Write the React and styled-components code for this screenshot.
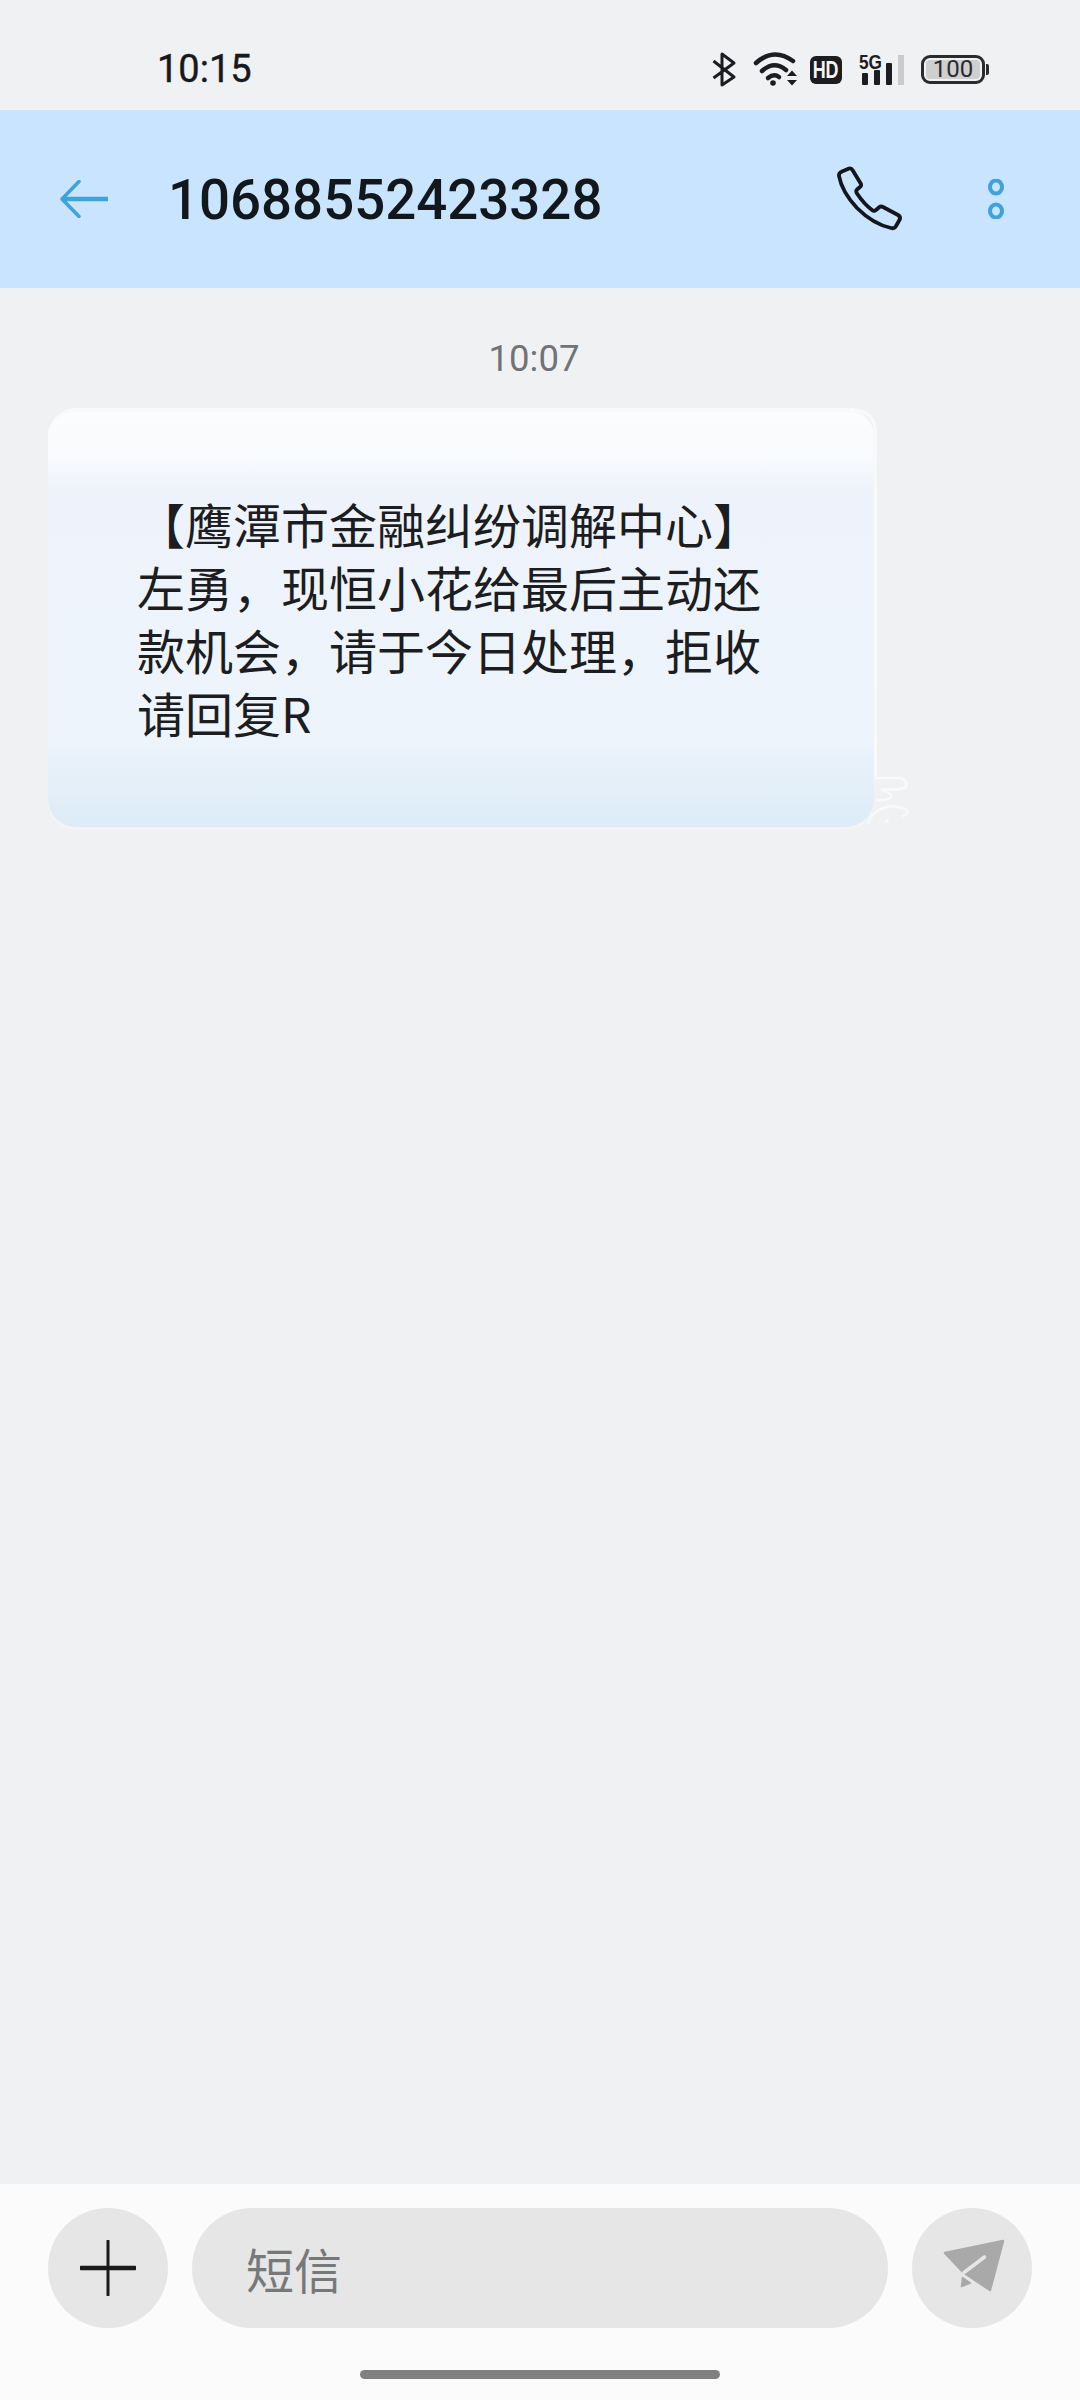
import React from "react";
import styled, { createGlobalStyle } from "styled-components";

const Global = createGlobalStyle`
  html, body { margin: 0; padding: 0; background: #f0f1f3; }
  * { box-sizing: border-box; }
`;

const Page = styled.div`
  width: 1080px;
  height: 2400px;
  display: flex;
  flex-direction: column;
  overflow: hidden;
  background: #f0f1f3;
  font-family: Roboto, "Noto Sans CJK SC", sans-serif;
`;

const StatusBar = styled.div`
  height: 110px;
  flex: none;
  display: flex;
  align-items: center;
  justify-content: space-between;
  padding: 0 91px 0 157px;
  color: #17191c;
`;

const Clock = styled.span`
  font-size: 38px;
  font-weight: 400;
  line-height: 1;
  margin-top: 28px;
  -webkit-text-stroke: 0.4px #17191c;
`;

const StatusIcons = styled.div`
  display: flex;
  align-items: center;
  margin-top: 28px;
`;

const StatusSvg = styled.svg`
  display: block;
  flex: none;
  overflow: visible;
  margin-left: ${(p) => p.$gap || 0}px;
`;

const HdBadge = styled.span`
  width: 32px;
  height: 28px;
  margin-left: 13px;
  margin-top: 2px;
  border-radius: 6px;
  background: #1c1d20;
  display: flex;
  align-items: center;
  justify-content: center;
`;

const HdLabel = styled.span`
  color: #f4f4f4;
  font-family: "Liberation Sans", sans-serif;
  font-size: 23px;
  font-weight: 700;
  line-height: 1;
  transform: scaleX(0.78);
`;

const Battery = styled.div`
  display: flex;
  align-items: center;
  margin-left: 15px;
`;

const BatteryBody = styled.div`
  width: 64px;
  height: 29px;
  border: 3px solid #2a2b2e;
  border-radius: 9px;
  padding: 2px;
`;

const BatteryFill = styled.div`
  height: 100%;
  border-radius: 4px;
  background: #cfcfcf;
  color: #2a2b2e;
  font-size: 24px;
  font-weight: 400;
  display: flex;
  align-items: center;
  justify-content: center;
`;

const BatteryTip = styled.div`
  width: 3px;
  height: 11px;
  margin-left: 1px;
  background: #2a2b2e;
  border-radius: 0 2px 2px 0;
`;

const Header = styled.header`
  height: 178px;
  flex: none;
  background: #c8e4ff;
  display: flex;
  align-items: center;
  padding: 0 76px 0 60px;
`;

const Title = styled.h1`
  margin: 2px 0 0 60px;
  flex: 1;
  font-size: 54.6px;
  font-weight: 500;
  color: #12171c;
  line-height: 1;
`;

const HeaderIcon = styled.svg`
  display: block;
  flex: none;
  margin-left: ${(p) => p.$gap || 0}px;
`;

const Thread = styled.main`
  flex: 1;
  padding: 49px 0 0 48px;
  display: flex;
  flex-direction: column;
  align-items: flex-start;
`;

const Stamp = styled.div`
  width: 972px;
  text-align: center;
  font-size: 36.5px;
  line-height: 44px;
  color: #717376;
`;

const Bubble = styled.div`
  position: relative;
  width: 826px;
  margin-top: 27px;
  padding: 80px 0 83px 89px;
  border-top: 4px solid #f8f9fa;
  border-radius: 28px;
  background: linear-gradient(
    to bottom,
    #fcfdfd 0%,
    #f8fafc 11%,
    #eef3fb 19%,
    #edf4fc 78%,
    #dcebf6 100%
  );
  box-shadow: 0 3px 0 #f3f4f5;
`;

const BubbleText = styled.p`
  margin: 0;
  width: 630px;
  font-family: "Noto Sans CJK SC", sans-serif;
  font-size: 48px;
  line-height: 63px;
  color: #1b1d21;
`;

const BubbleFlourish = styled.svg`
  position: absolute;
  left: 802px;
  top: -4px;
  opacity: 0.8;
`;

const Composer = styled.footer`
  height: 216px;
  flex: none;
  background: #fbfbfb;
  padding-top: 24px;
  display: flex;
  flex-direction: column;
  align-items: center;
`;

const ComposerRow = styled.div`
  width: 100%;
  padding: 0 48px;
  display: flex;
  gap: 24px;
`;

const RoundButton = styled.div`
  width: 120px;
  height: 120px;
  flex: none;
  border-radius: 50%;
  background: #e6e6e6;
  display: flex;
  align-items: center;
  justify-content: center;
`;

const Field = styled.div`
  flex: 1;
  height: 120px;
  border-radius: 60px;
  background: #e6e6e6;
  padding-left: 54px;
  display: flex;
  align-items: center;
  font-family: "Noto Sans CJK SC", sans-serif;
  font-size: 48px;
  color: #76787a;
`;

const HomeBar = styled.div`
  width: 360px;
  height: 9px;
  margin-top: 42px;
  border-radius: 5px;
  background: #808080;
`;

export default function App() {
  return (
    <Page>
      <Global />
      <StatusBar>
        <Clock>10:15</Clock>
        <StatusIcons>
          <StatusSvg width="24" height="34" viewBox="713 52 24 34" fill="none" stroke="#1c1d20" strokeWidth="3">
            <path d="M714.5 61 L735 77 L723 85 V54 L735 63 L714.5 78" strokeLinejoin="round" />
          </StatusSvg>
          <StatusSvg $gap={17} width="44" height="34" viewBox="754 51 44 34" fill="none" stroke="#1c1d20" strokeWidth="4.5" strokeLinecap="round">
            <path d="M757 62 Q775 46 794 60" />
            <path d="M763 70 Q775 59 787 69" />
            <path d="M769 77 Q775 72 780 76" />
            <circle cx="774" cy="82" r="2.8" fill="#1c1d20" stroke="none" />
            <path d="M788 75 L793 69.5 L798 75 Z M788 79 L793 84.5 L798 79 Z" fill="#1c1d20" stroke="none" />
          </StatusSvg>
          <HdBadge>
            <HdLabel>HD</HdLabel>
          </HdBadge>
          <StatusSvg $gap={17} width="47" height="32" viewBox="860 52 47 32">
            <text x="860" y="67.5" fontFamily="Liberation Sans, sans-serif" fontWeight="700" fontSize="21" textLength="23" lengthAdjust="spacingAndGlyphs" fill="#1c1d20">5G</text>
            <rect x="863" y="72" width="6" height="12" rx="1" fill="#1c1d20" />
            <rect x="875" y="69" width="6" height="15" rx="1" fill="#1c1d20" />
            <rect x="887" y="62" width="6" height="22" rx="1" fill="#1c1d20" />
            <rect x="899" y="54" width="6" height="30" fill="#cbcbcb" />
          </StatusSvg>
          <Battery>
            <BatteryBody>
              <BatteryFill>100</BatteryFill>
            </BatteryBody>
            <BatteryTip />
          </Battery>
        </StatusIcons>
      </StatusBar>

      <Header>
        <HeaderIcon width="48" height="38" viewBox="60 180 48 38" fill="none" stroke="#3fa2dc">
          <path d="M79 181.5 L62 199 L79 216.5" strokeLinecap="round" strokeLinejoin="round" strokeWidth="3.5" />
          <path d="M62 199 H108" strokeWidth="4.5" />
        </HeaderIcon>
        <Title>10688552423328</Title>
        <HeaderIcon width="90" height="90" viewBox="0 0 90 90" fill="none" stroke="#12171c" strokeWidth="3.8" strokeLinejoin="round">
          <path d="M17 17.5 L24 14.5 Q26.5 14 27.5 16 L36 30 Q36.5 32 35 33 L32 35.5 Q30.5 37 32 39.5 Q39 50 47 56 Q49 57.5 51 56 L54.5 53 Q56 52 58 53 L73 61 Q75.5 62.5 75 65 L71 72 Q69.5 75 66 74 Q48 70 32 54 Q17 38 14 22 Q13.5 19 17 17.5 Z" />
        </HeaderIcon>
        <HeaderIcon $gap={73} width="16" height="40" viewBox="0 0 16 40" fill="none" stroke="#3fa2dc" strokeWidth="4">
          <ellipse cx="8" cy="8" rx="6" ry="6.5" />
          <ellipse cx="8" cy="32" rx="6" ry="6.5" />
        </HeaderIcon>
      </Header>

      <Thread>
        <Stamp>10:07</Stamp>
        <Bubble>
          <BubbleText>【鹰潭市金融纠纷调解中心】左勇，现恒小花给最后主动还款机会，请于今日处理，拒收请回复R</BubbleText>
          <BubbleFlourish width="70" height="426" viewBox="850 408 70 426" fill="none" stroke="#fbfcfd" strokeWidth="2.5" strokeLinecap="round">
            <path d="M850 409.5 H852 Q875.5 410 875.5 434 V778" strokeWidth="3" />
            <path d="M876 778 H901 Q908 781 906 787 Q903 790 881 789.5 Q893 793 891 797 Q886 801 877 800" />
            <path d="M868 823 Q874 808 892 806 Q908 808 908 812 Q906 815 903 816" />
            <circle cx="887" cy="821" r="2" fill="#fbfcfd" stroke="none" />
          </BubbleFlourish>
        </Bubble>
      </Thread>

      <Composer>
        <ComposerRow>
          <RoundButton>
            <svg width="56" height="56" viewBox="0 0 56 56" fill="none" stroke="#1a1a1a" strokeLinecap="round">
              <path d="M28 1 V55" strokeWidth="3" />
              <path d="M1 28 H55" strokeWidth="4.5" />
            </svg>
          </RoundButton>
          <Field>短信</Field>
          <RoundButton>
            <svg width="80" height="80" viewBox="0 0 80 80" fill="#a9a9a9" strokeLinejoin="round">
              <path d="M13 25 L71 13 L58 62 L31 44 Z" stroke="#a9a9a9" strokeWidth="2.5" />
              <path d="M52.5 29 L32 44.5" stroke="#e6e6e6" strokeWidth="3.5" strokeLinecap="round" fill="none" />
              <path d="M30.5 49.5 L29.5 58.5 L38.5 55 Z" stroke="#a9a9a9" strokeWidth="1.5" />
            </svg>
          </RoundButton>
        </ComposerRow>
        <HomeBar />
      </Composer>
    </Page>
  );
}
